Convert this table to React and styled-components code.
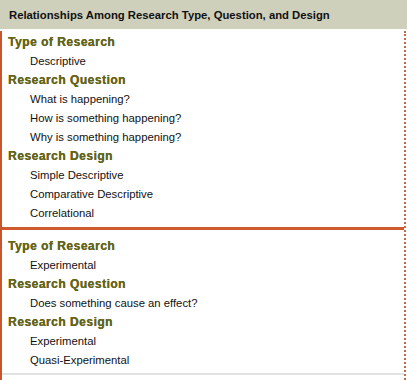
import React from "react";
import styled, { createGlobalStyle } from "styled-components";

const Global = createGlobalStyle`
  html, body { margin: 0; padding: 0; background: #fff; }
  body { font-family: "Liberation Sans", Arial, sans-serif; }
`;

const Frame = styled.div`
  width: 407px;
  height: 380px;
  overflow: hidden;
  display: flex;
  flex-direction: column;
`;

const TitleBar = styled.div`
  height: 29px;
  background: #cfd0bc;
  display: flex;
  align-items: center;
  padding-left: 9px;
  font-size: 11.3px;
  font-weight: bold;
  color: #111;
  box-sizing: border-box;
`;

const Body = styled.div`
  margin-top: 2px;
  margin-right: 1px;
  border-left: 2px solid #c8552b;
  border-right: 2px dotted #c26a44;
  flex: 1;
`;

const Section = styled.div`
  padding: ${(p) => (p.$last ? "7px 0 3px" : "2px 0 4px")};
  border-bottom: ${(p) => (p.$last ? "2px solid #e2e2e2" : "3px solid #cf5a2c")};
`;

const Heading = styled.div`
  height: 19px;
  line-height: 19px;
  padding-left: 6px;
  font-size: 12px;
  font-weight: bold;
  letter-spacing: 0.5px;
  color: #646419;
  text-shadow: 0.3px 0 0 #646419;
`;

const Item = styled.div`
  height: 19px;
  line-height: 19px;
  padding-left: 28px;
  font-size: 11.3px;
  color: #111;
`;

const sections = [
  [
    ["Type of Research", ["Descriptive"]],
    ["Research Question", ["What is happening?", "How is something happening?", "Why is something happening?"]],
    ["Research Design", ["Simple Descriptive", "Comparative Descriptive", "Correlational"]],
  ],
  [
    ["Type of Research", ["Experimental"]],
    ["Research Question", ["Does something cause an effect?"]],
    ["Research Design", ["Experimental", "Quasi-Experimental"]],
  ],
];

export default function App() {
  return (
    <Frame>
      <Global />
      <TitleBar>Relationships Among Research Type, Question, and Design</TitleBar>
      <Body>
        {sections.map((groups, si) => (
          <Section key={si} $last={si === sections.length - 1}>
            {groups.map(([h, items]) => (
              <React.Fragment key={h}>
                <Heading>{h}</Heading>
                {items.map((t) => (
                  <Item key={t}>{t}</Item>
                ))}
              </React.Fragment>
            ))}
          </Section>
        ))}
      </Body>
    </Frame>
  );
}
